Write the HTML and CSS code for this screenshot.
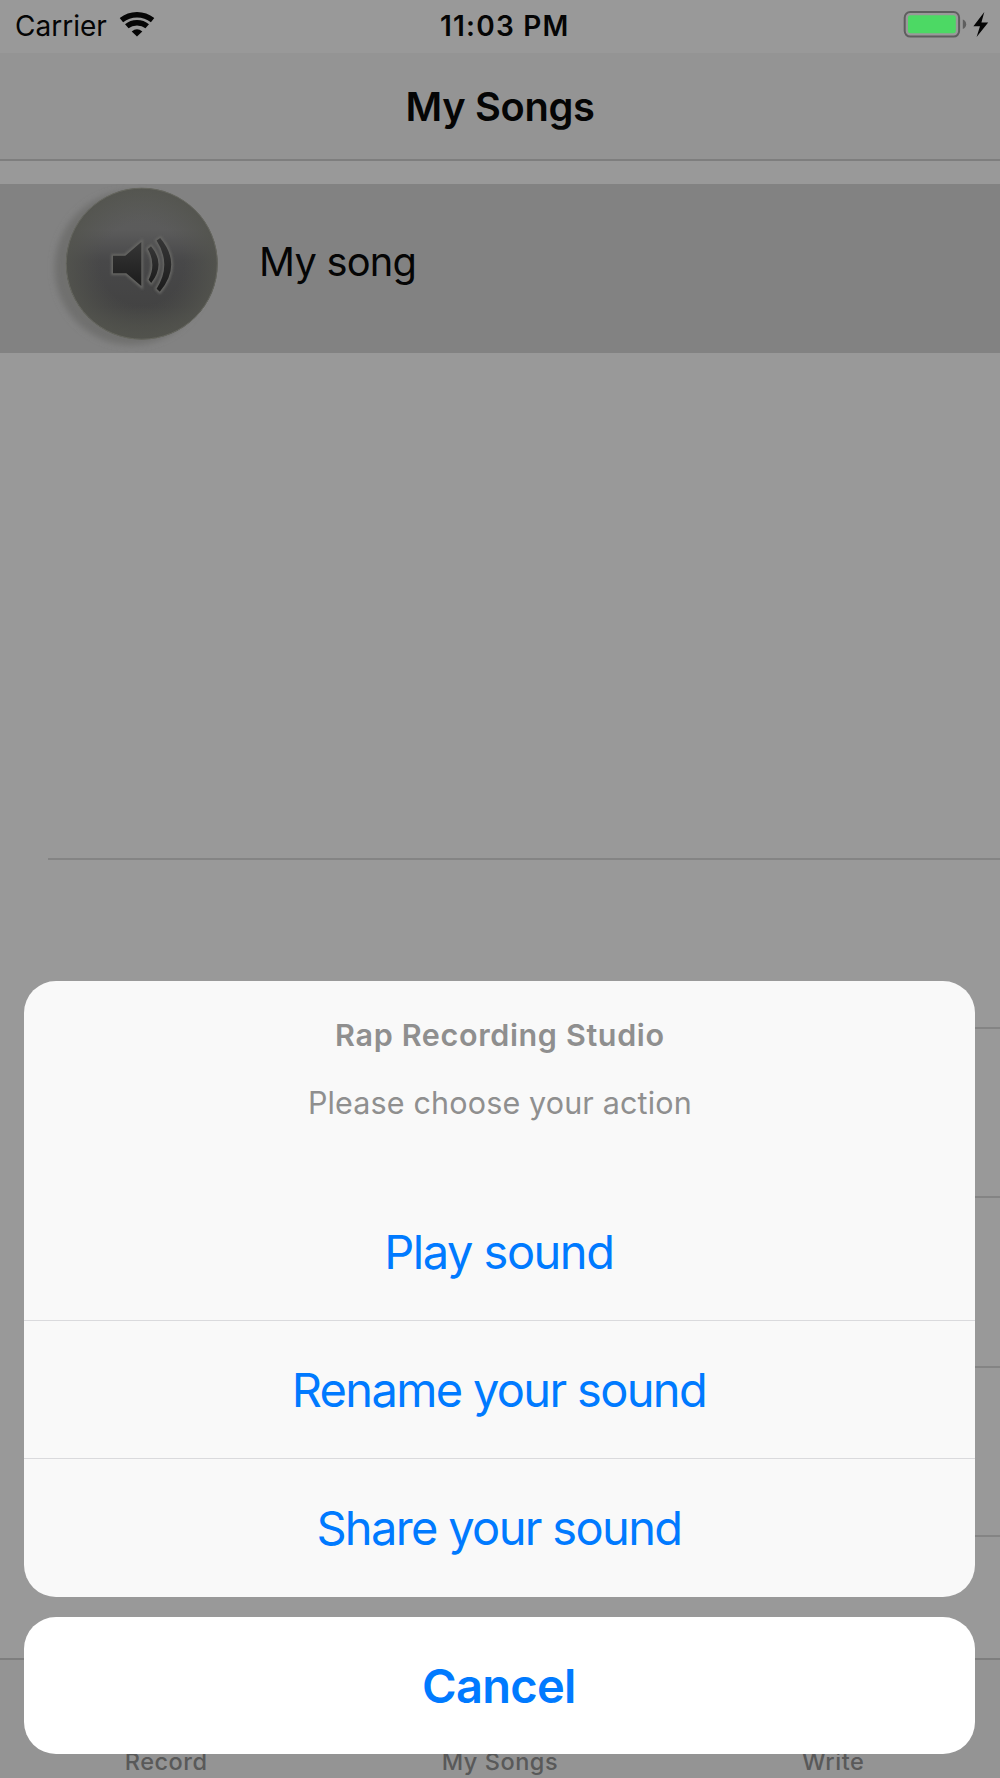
FILE: index.html
```html
<!DOCTYPE html>
<html lang="en">
<head>
<meta charset="utf-8">
<title>My Songs</title>
<link rel="stylesheet" href="styles.css">
</head>
<body>
<div class="app">
  <header class="status-bar">
    <div class="status-left">
      <span class="carrier">Carrier</span>
      <svg class="wifi" width="36" height="27" viewBox="0 0 36 27" aria-hidden="true">
        <g fill="none" stroke="#050505" stroke-width="5.4">
          <path d="M2.4 9.2Q9.2 3.7 18 3.7T33.6 9.2"/>
          <path d="M7.8 15.3Q12 11.7 18 11.7T28.2 15.3"/>
        </g>
        <path fill="#050505" d="M12.7 20.4Q18 15.9 23.3 20.4L18 25.6Z"/>
      </svg>
    </div>
    <span class="time">11:03 PM</span>
    <svg class="battery" width="88" height="30" viewBox="902 9 88 30" aria-hidden="true">
      <rect x="904.7" y="12" width="54.4" height="24.6" rx="5.5" fill="none" stroke="#5e5e5e" stroke-width="2"/>
      <rect x="908" y="15.3" width="47.8" height="18" rx="2.5" fill="#4cd964"/>
      <path d="M962.8 19.5Q966.2 21 966.2 24.3T962.8 29Z" fill="#5e5e5e"/>
      <path d="M984.3 12L973.4 26.2L980 26.2L976.6 37L988.2 22.6L981.4 22.6Z" fill="#050505"/>
    </svg>
  </header>
  <div class="nav-bar"><h1 class="nav-title">My Songs</h1></div>
  <main class="songs">
    <div class="song-row">
      <svg class="song-icon" width="200" height="168" viewBox="30 184 200 168" aria-hidden="true">
        <defs>
          <filter id="soft" x="-20%" y="-20%" width="140%" height="140%"><feGaussianBlur stdDeviation="3"/></filter>
          <filter id="glow" x="-30%" y="-30%" width="160%" height="160%"><feGaussianBlur stdDeviation="1.2"/></filter>
          <linearGradient id="disc" x1="0" y1="0" x2="0" y2="1">
            <stop offset="0" stop-color="#5c5d5b"/>
            <stop offset=".28" stop-color="#5b5b5b"/>
            <stop offset=".48" stop-color="#484849"/>
            <stop offset=".78" stop-color="#434343"/>
            <stop offset="1" stop-color="#4c4d48"/>
          </linearGradient>
          <radialGradient id="rim">
            <stop offset=".55" stop-color="#53544e" stop-opacity="0"/>
            <stop offset="1" stop-color="#53544e" stop-opacity=".85"/>
          </radialGradient>
          <linearGradient id="ink" x1="0" y1="0" x2="0" y2="1">
            <stop offset="0" stop-color="#363636"/>
            <stop offset="1" stop-color="#1c1c1c"/>
          </linearGradient>
          <g id="speaker">
            <path d="M113 255.7H125.3L141.3 242V286L126.3 273.3H113Z"/>
            <path d="M147.8 249L151 246.3Q166 264 151.2 283L148.6 279.8Q156.5 264 147.8 249Z"/>
            <path d="M156.6 240.6L160.2 238Q182.5 264.5 159.8 291.8L156.6 288.7Q172 264.5 156.6 240.6Z"/>
          </g>
        </defs>
        <circle cx="131.5" cy="268" r="77" fill="#6f6f6e" filter="url(#soft)"/>
        <circle cx="141.8" cy="263.7" r="75.8" fill="url(#disc)"/>
        <circle cx="141.8" cy="263.7" r="75.5" fill="url(#rim)" stroke="#66675f" stroke-width="1"/>
        <use href="#speaker" fill="#666664" stroke="#666664" stroke-width="3.5" filter="url(#glow)"/>
        <use href="#speaker" fill="url(#ink)"/>
      </svg>
      <span class="song-name">My song</span>
    </div>
    <div class="gap-row"></div>
    <div class="empty-row"></div>
    <div class="empty-row"></div>
    <div class="empty-row"></div>
    <div class="empty-row"></div>
  </main>
  <nav class="tab-bar">
    <span class="tab tab-record">Record</span>
    <span class="tab tab-songs">My Songs</span>
    <span class="tab tab-write">Write</span>
  </nav>
  <div class="sheet">
    <section class="actions">
      <div class="sheet-head">
        <h2 class="sheet-title">Rap Recording Studio</h2>
        <p class="sheet-message">Please choose your action</p>
      </div>
      <button class="action play">Play sound</button>
      <button class="action">Rename your sound</button>
      <button class="action">Share your sound</button>
    </section>
    <button class="cancel">Cancel</button>
  </div>
</div>
</body>
</html>
```
FILE: styles.css
```css
* { box-sizing: border-box; }
body { margin: 0; }
h1, h2, p { margin: 0; }

.app {
  position: relative;
  display: flex;
  flex-direction: column;
  width: 1000px;
  height: 1778px;
  overflow: hidden;
  background: #999;
  color: #050505;
  font-family: Inter, "Liberation Sans", sans-serif;
}

.status-bar {
  display: grid;
  grid-template-columns: 440px 1fr auto;
  height: 53px;
  padding-right: 10px;
  font-size: 28px;
  line-height: 53px;
}
.status-left { display: flex; padding-left: 15px; gap: 12.5px; }
.wifi { margin-top: 11px; }
.time { font-weight: 600; letter-spacing: 1.2px; }
.battery { margin-top: 9px; }

.nav-bar {
  height: 108px;
  background: #949494;
  border-bottom: 2px solid #7e7e7e;
}
.nav-title {
  font-size: 39.8px;
  font-weight: 600;
  line-height: 108px;
  letter-spacing: -.35px;
  text-align: center;
}

.songs { flex: 1; padding-top: 23px; }
.song-row {
  display: flex;
  height: 169px;
  padding-left: 30px;
  background: #828282;
}
.song-name {
  margin-left: 29px;
  font-size: 39.8px;
  line-height: 156px;
  letter-spacing: -.75px;
}
.gap-row, .empty-row {
  margin-left: 48px;
  border-bottom: 2px solid #848484;
}
.gap-row { height: 507px; }
.empty-row { height: 169.2px; }

.tab-bar {
  display: grid;
  grid-template-columns: repeat(3, 333.3px);
  height: 120px;
  padding-top: 90px;
  background: #949494;
  border-top: 2px solid #7e7e7e;
  color: #595959;
  font-size: 23.5px;
  font-weight: 500;
  line-height: 24px;
  letter-spacing: .55px;
  text-align: center;
}
.tab-record { padding-right: 1px; }

/* Modal action sheet over the song list */
.sheet {
  position: absolute;
  left: 24.4px;
  top: 981px;
  display: flex;
  flex-direction: column;
  gap: 20px;
  width: 951px;
}
.actions {
  height: 615.5px;
  border-radius: 32px;
  overflow: hidden;
  background: #f9f9f9;
}
.sheet-head {
  height: 200.5px;
  padding-top: 20px;
  color: #8f8f8f;
  text-align: center;
}
.sheet-title {
  font-size: 30.5px;
  font-weight: 600;
  line-height: 68px;
  letter-spacing: .65px;
}
.sheet-message {
  font-size: 30.5px;
  line-height: 67px;
  letter-spacing: .15px;
}
.action, .cancel {
  display: block;
  width: 100%;
  padding: 0 2px 0 0;
  border: 0;
  background: none;
  color: #007aff;
  font-family: inherit;
  font-size: 47px;
  line-height: 137px;
  text-align: center;
}
.action {
  height: 138.5px;
  border-top: 1px solid #dadadd;
  letter-spacing: -1.66px;
}
.play { height: 138px; border-top-color: transparent; letter-spacing: -1.5px; }
.cancel {
  height: 137px;
  border-radius: 32px;
  background: #fff;
  font-weight: 600;
  letter-spacing: -.7px;
}
```
